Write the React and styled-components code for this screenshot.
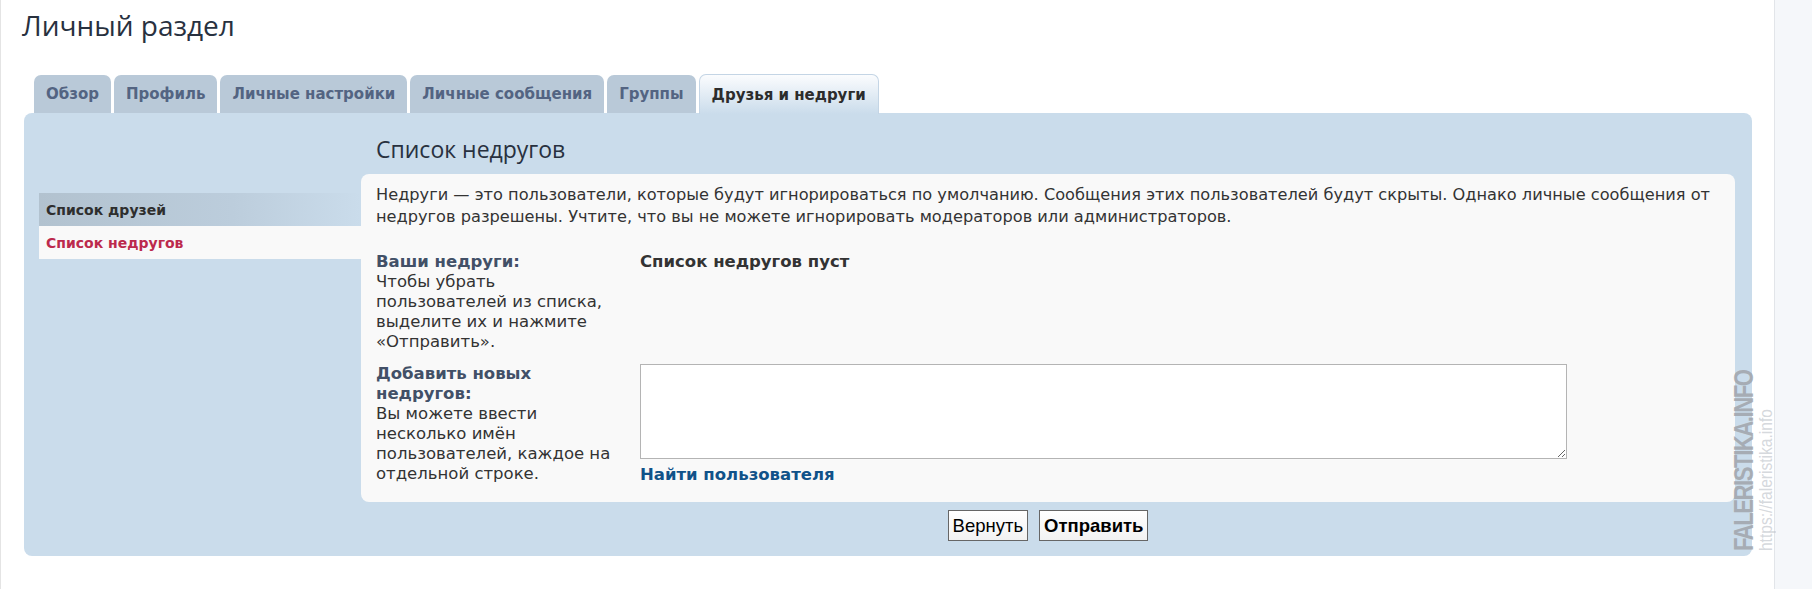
import React from 'react';
import styled, { createGlobalStyle, css } from 'styled-components';

const Global = createGlobalStyle`
  html, body {
    margin: 0;
    padding: 0;
    background: #fff;
  }
  body {
    font-family: "DejaVu Sans", Verdana, sans-serif;
    color: #333;
  }
`;

const Page = styled.div`
  position: relative;
  display: flex;
  height: 589px;
  overflow: hidden;
`;

const Main = styled.div`
  flex: 1;
  border-left: 1px solid #e4e4e4;
  padding: 0 22px 0 23px;
`;

const SideStrip = styled.div`
  width: 37px;
  border-left: 1px solid #e2e5e9;
  background: #f5f7fa;
`;

const Title = styled.h2`
  margin: 0;
  padding: 7px 0 0;
  height: 75px;
  box-sizing: border-box;
  font-family: "Open Sans", "Noto Sans", sans-serif;
  font-weight: 400;
  font-size: 28px;
  line-height: 36px;
  color: #28313f;
  text-indent: -2px;
`;

const Tabs = styled.ul`
  display: flex;
  align-items: flex-end;
  gap: 3px;
  list-style: none;
  margin: 0 0 0 10px;
  padding: 0;
  height: 38px;
  position: relative;
  z-index: 1;
`;

const Tab = styled.li`
  height: 38px;
  box-sizing: border-box;
  padding: 0 12px;
  display: flex;
  align-items: center;
  border-radius: 7px 7px 0 0;
  background: #b9c9d8;
  color: #536482;
  font-weight: bold;
  font-size: 15px;
  white-space: nowrap;

  ${p => p.active && css`
    height: 40px;
    margin-bottom: -1px;
    background: linear-gradient(#fbfcfe, #cadceb);
    border: 1px solid #c4d5e5;
    border-bottom: none;
    color: #2c2c2c;
  `}
`;

const Panel = styled.div`
  display: grid;
  grid-template-columns: 322px 1fr;
  background: #cadceb;
  border-radius: 8px;
  padding: 0 17px 15px 15px;
  height: 443px;
  box-sizing: border-box;
`;

const Menu = styled.ul`
  list-style: none;
  margin: 80px 0 0;
  padding: 0;
`;

const MenuItem = styled.li`
  height: 33px;
  display: flex;
  align-items: center;
  padding-left: 7px;
  font-size: 14px;
  font-weight: bold;
  color: #2e2e2e;
  background: linear-gradient(to right, #b2c2cf 0%, #bccddc 60%, #cadceb 100%);

  ${p => p.active && css`
    background: #f9f9f9;
    color: #bc2a4d;
  `}
`;

const Content = styled.div`
  display: flex;
  flex-direction: column;
`;

const Heading = styled.h3`
  margin: 0;
  height: 61px;
  padding: 21px 0 0 15px;
  box-sizing: border-box;
  font-family: "Open Sans", "Noto Sans", sans-serif;
  font-weight: 400;
  font-size: 23px;
  line-height: 30px;
  color: #28313f;
`;

const Inner = styled.div`
  background: #f9f9f9;
  border-radius: 8px;
  padding: 10px 15px 17px;
  font-size: 16.5px;
`;

const Intro = styled.p`
  margin: 0 0 24px;
  font-size: 16.2px;
  line-height: 22px;
  color: #333;
`;

const Field = styled.dl`
  display: grid;
  grid-template-columns: 264px 1fr;
  margin: 0 0 12px;
  line-height: 20px;

  &:last-child {
    margin-bottom: 0;
  }
`;

const Label = styled.dt`
  margin: 0;
  padding-right: 25px;
  color: #333;

  strong {
    display: block;
    color: #425067;
  }
`;

const Value = styled.dd`
  margin: 0;
  strong {
    color: #333;
  }
`;

const Area = styled.textarea`
  display: block;
  width: 927px;
  height: 95px;
  box-sizing: border-box;
  border: 1px solid #b4b4b4;
  background: #fff;
  resize: vertical;
  margin: 0 0 6px;
`;

const Link = styled.a`
  font-weight: bold;
  color: #105289;
  text-decoration: none;
`;

const Actions = styled.div`
  display: flex;
  justify-content: center;
  gap: 11px;
  padding-top: 8px;
`;

const Button = styled.button`
  height: 31px;
  padding: 0 4px;
  border: 1px solid #666;
  background: linear-gradient(#ffffff, #f2f2f2);
  font-family: "Liberation Sans", Arial, sans-serif;
  font-size: 18.5px;
  color: #000;
  font-weight: ${p => (p.primary ? 'bold' : 'normal')};
`;

const Watermark = styled.div`
  position: absolute;
  left: 1734px;
  top: 380px;
  width: 42px;
  height: 188px;
  display: flex;
  flex-direction: column;
  justify-content: center;
  writing-mode: vertical-rl;
  transform: rotate(180deg) scaleY(0.82);
  font-family: "Liberation Sans", sans-serif;
  line-height: 21px;
  white-space: nowrap;

  b {
    font-size: 27px;
    letter-spacing: -1.8px;
    color: rgba(160, 164, 170, 0.85);
  }
  span {
    font-size: 19px;
    color: rgba(190, 195, 202, 0.65);
  }
`;

export default function App() {
  return (
    <Page>
      <Global />
      <Main>
        <Title>Личный раздел</Title>
        <Tabs>
          <Tab>Обзор</Tab>
          <Tab>Профиль</Tab>
          <Tab>Личные настройки</Tab>
          <Tab>Личные сообщения</Tab>
          <Tab>Группы</Tab>
          <Tab active>Друзья и недруги</Tab>
        </Tabs>
        <Panel>
          <Menu>
            <MenuItem>Список друзей</MenuItem>
            <MenuItem active>Список недругов</MenuItem>
          </Menu>
          <Content>
            <Heading>Список недругов</Heading>
            <Inner>
              <Intro>
                Недруги — это пользователи, которые будут игнорироваться по умолчанию. Сообщения этих пользователей будут скрыты. Однако личные сообщения от недругов разрешены. Учтите, что вы не можете игнорировать модераторов или администраторов.
              </Intro>
              <Field>
                <Label>
                  <strong>Ваши недруги:</strong>
                  Чтобы убрать пользователей из списка, выделите их и нажмите «Отправить».
                </Label>
                <Value><strong>Список недругов пуст</strong></Value>
              </Field>
              <Field>
                <Label>
                  <strong>Добавить новых недругов:</strong>
                  Вы можете ввести несколько имён пользователей, каждое на отдельной строке.
                </Label>
                <Value>
                  <Area />
                  <Link href="#">Найти пользователя</Link>
                </Value>
              </Field>
            </Inner>
            <Actions>
              <Button>Вернуть</Button>
              <Button primary>Отправить</Button>
            </Actions>
          </Content>
        </Panel>
      </Main>
      <SideStrip />
      <Watermark>
        <b>FALERISTIKA.INFO</b>
        <span>https://faleristika.info</span>
      </Watermark>
    </Page>
  );
}
